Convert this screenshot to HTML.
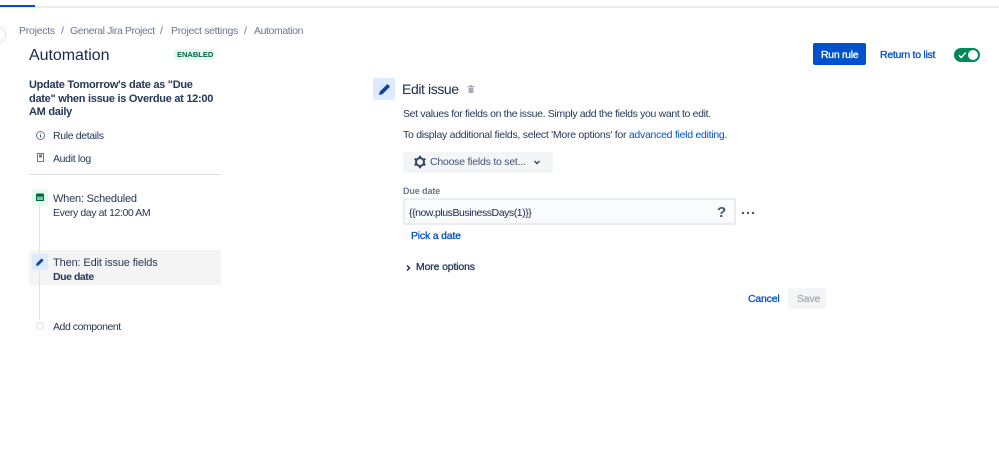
<!DOCTYPE html>
<html>
<head>
<meta charset="utf-8">
<style>
html,body{margin:0;padding:0;background:#fff}
body{width:999px;height:452px;position:relative;overflow:hidden;font-family:"Liberation Sans",sans-serif;color:#253858}
#w{position:absolute;left:0;top:0;width:999px;height:452px;filter:blur(.3px)}
.t{position:absolute;white-space:nowrap;line-height:14px;font-size:10.5px;letter-spacing:-.35px}
.m{font-weight:normal;-webkit-text-stroke:.3px currentColor}
.b{position:absolute}
a{color:#0052cc;text-decoration:none}
svg{position:absolute;display:block}
</style>
</head>
<body>
<div id="w">
<div class="b" style="left:0;top:6px;width:999px;height:2px;background:#ebecf0"></div>
<div class="b" style="left:0;top:5px;width:35px;height:2px;background:#0052cc"></div>
<div class="b" style="left:-12px;top:26px;width:16px;height:16px;border:1px solid #dfe1e6;border-radius:50%"></div>

<div class="t" style="left:19px;top:24px;color:#6b778c;letter-spacing:-.25px">Projects</div>
<div class="t" style="left:61px;top:24px;color:#6b778c">/</div>
<div class="t" style="left:70px;top:24px;color:#6b778c;letter-spacing:-.4px">General Jira Project</div>
<div class="t" style="left:160px;top:24px;color:#6b778c">/</div>
<div class="t" style="left:171px;top:24px;color:#6b778c;letter-spacing:-.3px">Project settings</div>
<div class="t" style="left:244px;top:24px;color:#6b778c">/</div>
<div class="t" style="left:254px;top:24px;color:#6b778c;letter-spacing:-.4px">Automation</div>

<div class="t" style="left:29px;top:46px;font-size:16px;line-height:20px;color:#172b4d;letter-spacing:-.05px">Automation</div>
<div class="b" style="left:174px;top:49px;width:41px;height:11px;background:#e3fcef;border-radius:2px"></div>
<div class="t" style="left:177px;top:48px;font-size:7.5px;font-weight:bold;color:#006644;letter-spacing:0">ENABLED</div>

<div class="t" style="left:29px;top:79px;font-size:11px;font-weight:bold;line-height:13.5px;color:#253858;letter-spacing:-.28px">Update Tomorrow's date as "Due<br>date" when issue is Overdue at 12:00<br>AM daily</div>

<svg style="left:35px;top:130px" width="11" height="11" viewBox="0 0 11 11"><circle cx="5.5" cy="5.5" r="4" fill="none" stroke="#6b778c" stroke-width="1"/><path d="M5.5 3.5v.8M5.5 5v2.5" stroke="#42526e" stroke-width="1"/></svg>
<div class="t" style="left:53px;top:129px;letter-spacing:-.35px">Rule details</div>
<svg style="left:35px;top:152px" width="11" height="11" viewBox="0 0 11 11"><path d="M2.5 1.5h6v8h-6z" fill="none" stroke="#6b778c" stroke-width="1"/><path d="M4 2.5h3v3H4z" fill="#6b778c"/></svg>
<div class="t" style="left:53px;top:152px;letter-spacing:-.33px">Audit log</div>
<div class="b" style="left:29px;top:174px;width:193px;height:1px;background:#dfe1e6"></div>

<div class="b" style="left:29px;top:250px;width:192px;height:35px;background:#f4f4f4;border-radius:2px"></div>
<div class="b" style="left:39px;top:200px;width:1px;height:120px;background:#dfe1e6"></div>

<div class="b" style="left:32px;top:189px;width:16px;height:16px;background:#e3fcef;border-radius:2px"></div>
<svg style="left:35px;top:192px" width="10" height="10" viewBox="0 0 10 10"><path d="M1 2.5a1 1 0 0 1 1-1h6a1 1 0 0 1 1 1V9H1z" fill="#006644"/><path d="M2 4.5h6V8H2z" fill="#79c7a2"/></svg>
<div class="t" style="left:53px;top:192px;font-size:11px;letter-spacing:-.2px">When: Scheduled</div>
<div class="t" style="left:53px;top:206px;letter-spacing:-.4px">Every day at 12:00 AM</div>

<div class="b" style="left:32px;top:254px;width:16px;height:16px;background:#deebff;border-radius:2px"></div>
<svg style="left:35px;top:257px" width="10" height="10" viewBox="0 0 10 10"><path d="M1 9l.6-2.6L6.6 1.4 8.6 3.4 3.6 8.4z" fill="#0747a6"/></svg>
<div class="t" style="left:53px;top:256px;font-size:11px;letter-spacing:-.13px">Then: Edit issue fields</div>
<div class="t" style="left:53px;top:270px;font-weight:bold;letter-spacing:-.45px">Due date</div>

<div class="b" style="left:36px;top:322px;width:6px;height:6px;background:#fff;border:1px solid #dfe1e6;border-radius:50%"></div>
<div class="t" style="left:53px;top:320px;letter-spacing:-.45px">Add component</div>

<div class="b" style="left:373px;top:78px;width:22px;height:22px;background:#deebff;border-radius:2px"></div>
<svg style="left:378px;top:83px" width="13" height="13" viewBox="0 0 13 13"><path d="M1 12l.8-3.4L8.8 1.6a1 1 0 0 1 1.4 0l1.2 1.2a1 1 0 0 1 0 1.4L4.4 11.2z" fill="#0747a6"/></svg>
<div class="t" style="left:402px;top:80px;font-size:14px;line-height:18px;color:#172b4d;letter-spacing:-.4px">Edit issue</div>
<svg style="left:466px;top:84px" width="10" height="10" viewBox="0 0 10 10"><path d="M1.5 2h7v1h-7zM4 1h2v1H4zM2.5 3.5h5V9h-5z" fill="#a5adba"/></svg>

<div class="t" style="left:403px;top:107px;letter-spacing:-.34px">Set values for fields on the issue. Simply add the fields you want to edit.</div>
<div class="t" style="left:403px;top:128px;letter-spacing:-.27px">To display additional fields, select 'More options' for <a>advanced field editing</a>.</div>

<div class="b" style="left:403px;top:152px;width:150px;height:21px;background:#f4f5f7;border-radius:2px"></div>
<svg style="left:413px;top:155px" width="14" height="14" viewBox="0 0 14 14"><circle cx="7" cy="7" r="4" fill="none" stroke="#344563" stroke-width="2"/><path d="M7 .8v2.4M7 10.8v2.4M1.6 3.9l2.1 1.2M10.3 8.9l2.1 1.2M1.6 10.1l2.1-1.2M10.3 5.1l2.1-1.2" stroke="#344563" stroke-width="2"/></svg>
<div class="t" style="left:430px;top:155px;color:#42526e;letter-spacing:-.23px">Choose fields to set...</div>
<svg style="left:533px;top:159px" width="8" height="7" viewBox="0 0 8 7"><path d="M1.5 2L4 4.5 6.5 2" fill="none" stroke="#344563" stroke-width="1.4"/></svg>

<div class="t" style="left:403px;top:184px;font-size:9px;font-weight:bold;color:#6b778c;letter-spacing:-.1px">Due date</div>
<div class="b" style="left:403px;top:198px;width:329px;height:23px;background:#fafbfc;border:2px solid #ebecf0;border-radius:2px"></div>
<div class="t" style="left:409px;top:206px;color:#172b4d;letter-spacing:-.44px">{{now.plusBusinessDays(1)}}</div>
<div class="t" style="left:717px;top:205px;font-size:15px;line-height:16px;font-weight:bold;color:#42526e;letter-spacing:0">?</div>
<svg style="left:741px;top:211px" width="14" height="4" viewBox="0 0 14 4"><circle cx="2" cy="2" r="1.2" fill="#42526e"/><circle cx="7" cy="2" r="1.2" fill="#42526e"/><circle cx="12" cy="2" r="1.2" fill="#42526e"/></svg>
<div class="t m" style="left:411px;top:229px;color:#0052cc;letter-spacing:-.2px">Pick a date</div>

<svg style="left:405px;top:264px" width="7" height="8" viewBox="0 0 7 8"><path d="M2 1.5L4.5 4 2 6.5" fill="none" stroke="#172b4d" stroke-width="1.4"/></svg>
<div class="t m" style="left:416px;top:260px;color:#253858;letter-spacing:-.15px">More options</div>

<div class="t m" style="left:748px;top:292px;color:#0052cc;letter-spacing:-.2px">Cancel</div>
<div class="b" style="left:788px;top:288px;width:38px;height:21px;background:#f4f5f7;border-radius:2px"></div>
<div class="t m" style="left:797px;top:292px;color:#a5adba;letter-spacing:-.2px">Save</div>

<div class="b" style="left:813px;top:43px;width:53px;height:22px;background:#0052cc;border-radius:2px"></div>
<div class="t m" style="left:821px;top:48px;color:#fff;letter-spacing:-.3px">Run rule</div>
<div class="t m" style="left:880px;top:48px;color:#0052cc;letter-spacing:-.27px">Return to list</div>
<div class="b" style="left:954px;top:48px;width:26px;height:14px;background:#00875a;border-radius:7px"></div>
<div class="b" style="left:968px;top:50px;width:10px;height:10px;background:#fff;border-radius:50%"></div>
<svg style="left:957px;top:50px" width="11" height="10" viewBox="0 0 11 10"><path d="M2 5.2L4.3 7.5 8.8 2.5" fill="none" stroke="#fff" stroke-width="1.4"/></svg>
</div>
</body>
</html>
